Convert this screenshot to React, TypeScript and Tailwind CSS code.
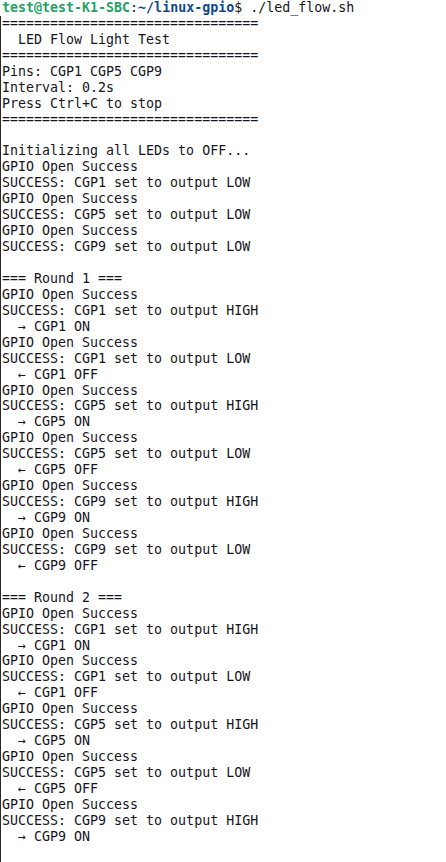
const sep = "================================";

const header = [
  sep,
  "  LED Flow Light Test",
  sep,
  "Pins: CGP1 CGP5 CGP9",
  "Interval: 0.2s",
  "Press Ctrl+C to stop",
  sep,
  "",
  "Initializing all LEDs to OFF...",
  "GPIO Open Success",
  "SUCCESS: CGP1 set to output LOW",
  "GPIO Open Success",
  "SUCCESS: CGP5 set to output LOW",
  "GPIO Open Success",
  "SUCCESS: CGP9 set to output LOW",
  "",
];

function roundLines(n: number, pins: string[]) {
  const out = [`=== Round ${n} ===`];
  pins.forEach((p, i) => {
    out.push("GPIO Open Success");
    out.push(`SUCCESS: ${p} set to output HIGH`);
    out.push(`  → ${p} ON`);
    // round 2 gets cut off after the last ON
    if (n === 2 && i === pins.length - 1) return;
    out.push("GPIO Open Success");
    out.push(`SUCCESS: ${p} set to output LOW`);
    out.push(`  ← ${p} OFF`);
  });
  return out;
}

const lines = [
  ...header,
  ...roundLines(1, ["CGP1", "CGP5", "CGP9"]),
  "",
  ...roundLines(2, ["CGP1", "CGP5", "CGP9"]),
];

export default function App() {
  return (
    <div className="w-[446px] h-[862px] overflow-hidden bg-white text-[#171421] font-['DejaVu_Sans_Mono',monospace] text-[13.3px] leading-[15.95px]">
      {/* prompt */}
      <div className="whitespace-pre pl-[2px] h-[15.95px]">
        <span className="font-bold text-[#26a269]">test@test-K1-SBC</span>
        <span>:</span>
        <span className="font-bold text-[#12488b]">~/linux-gpio</span>
        <span>$ ./led_flow.sh</span>
      </div>
      <div className="border-l border-[#2a2a2a] pl-[1px] h-full">
        {lines.map((l, i) => (
          <div key={i} className="whitespace-pre h-[15.95px]">
            {l}
          </div>
        ))}
      </div>
    </div>
  );
}
